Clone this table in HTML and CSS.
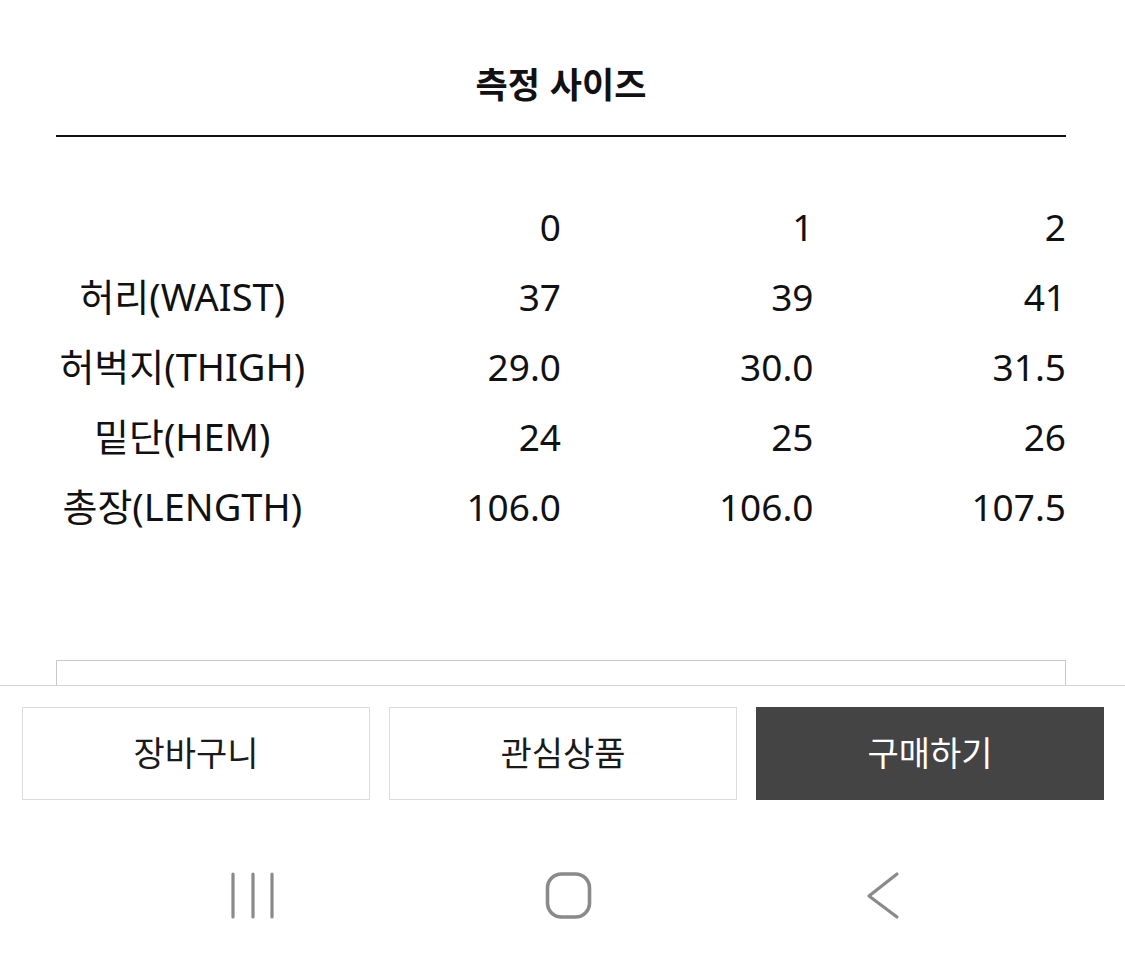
FILE: index.html
```html
<!DOCTYPE html>
<html lang="ko">
<head>
<meta charset="utf-8">
<link rel="stylesheet" href="styles.css">
</head>
<body>
<div class="screen">
  <main class="content">
    <header class="title-bar">
      <h1 class="title">측정 사이즈</h1>
    </header>
    <div class="size-table">
      <div class="cell label"></div>
      <div class="cell num">0</div>
      <div class="cell num">1</div>
      <div class="cell num">2</div>

      <div class="cell label">허리(WAIST)</div>
      <div class="cell num">37</div>
      <div class="cell num">39</div>
      <div class="cell num">41</div>

      <div class="cell label">허벅지(THIGH)</div>
      <div class="cell num">29.0</div>
      <div class="cell num">30.0</div>
      <div class="cell num">31.5</div>

      <div class="cell label">밑단(HEM)</div>
      <div class="cell num">24</div>
      <div class="cell num">25</div>
      <div class="cell num">26</div>

      <div class="cell label">총장(LENGTH)</div>
      <div class="cell num">106.0</div>
      <div class="cell num">106.0</div>
      <div class="cell num">107.5</div>
    </div>
    <div class="next-box"></div>
  </main>
  <div class="action-bar">
    <button class="btn">장바구니</button>
    <button class="btn">관심상품</button>
    <button class="btn btn-dark">구매하기</button>
  </div>
  <nav class="nav-bar">
    <svg class="nav-icon" width="50" height="50" viewBox="0 0 50 50">
      <path d="M5 4 V47 M25 4 V47 M44 4 V47" stroke="#8a8a8a" stroke-width="3.2" stroke-linecap="round" fill="none"/>
    </svg>
    <svg class="nav-icon" width="50" height="50" viewBox="0 0 50 50">
      <rect x="4.5" y="4" width="42" height="43" rx="14" ry="14" stroke="#8a8a8a" stroke-width="3.6" fill="none"/>
    </svg>
    <svg class="nav-icon" width="50" height="50" viewBox="0 0 50 50">
      <path d="M39 4 L11 26 L39 47" stroke="#8a8a8a" stroke-width="3.2" stroke-linecap="round" stroke-linejoin="round" fill="none"/>
    </svg>
  </nav>
</div>
</body>
</html>
```

FILE: styles.css
```css
* { box-sizing: border-box; }
html, body {
  margin: 0;
  padding: 0;
  background: #ffffff;
}
body {
  font-family: "Noto Sans", "Noto Sans CJK KR", sans-serif;
  color: #111111;
}
.screen {
  width: 1125px;
  height: 961px;
  display: flex;
  flex-direction: column;
  overflow: hidden;
}
.content {
  height: 685px;
  overflow: hidden;
  padding: 0 59px 0 56px;
  flex: none;
}
.title-bar {
  height: 137px;
  border-bottom: 2px solid #111;
  display: flex;
  align-items: center;
  justify-content: center;
  padding: 64px 0 35px;
}
.title {
  margin: 0;
  font-family: "Noto Sans CJK KR", sans-serif;
  font-size: 35px;
  line-height: 1;
  font-weight: 700;
  color: #111;
}
.size-table {
  margin-top: 54px;
  display: grid;
  grid-template-columns: repeat(4, 1fr);
  grid-auto-rows: 70px;
}
.cell {
  display: flex;
  align-items: center;
  font-size: 37px;
  line-height: 1;
  color: #111;
}
.cell.label {
  justify-content: center;
  font-size: 38px;
}
.cell.num {
  justify-content: flex-end;
}
.next-box {
  margin-top: 119px;
  height: 80px;
  border: 1px solid #c8c8c8;
}
.action-bar {
  flex: none;
  border-top: 1px solid #d4d4d4;
  padding: 21px 21px 0 22px;
  display: flex;
  gap: 19px;
  height: 115px;
}
.btn {
  flex: 1;
  height: 93px;
  background: #fff;
  border: 1px solid #dcdcdc;
  font-family: "Noto Sans CJK KR", sans-serif;
  font-size: 34px;
  color: #1a1a1a;
  padding: 0 0 4px;
}
.btn-dark {
  background: #444444;
  border-color: #444444;
  color: #ffffff;
}
.nav-bar {
  flex: 1;
  display: flex;
  align-items: flex-start;
  padding: 70px 0 0 228px;
  gap: 265px;
}
.nav-icon {
  display: block;
  flex: none;
}
```
